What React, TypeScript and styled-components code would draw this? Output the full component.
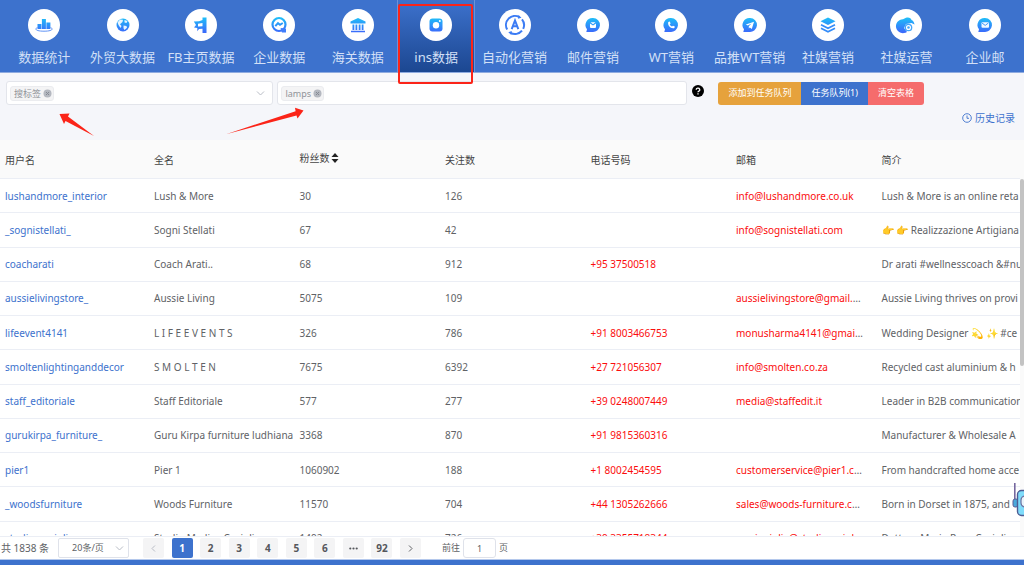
import React from "react";
import styled, { createGlobalStyle, css } from "styled-components";

const BLUE = "#3d72cd";

const Global = createGlobalStyle`
  *, *::before, *::after { box-sizing: border-box; }
  html, body { margin: 0; height: 100%; }
  body, button, input, select {
    font-family: "Noto Sans", "Noto Sans CJK SC", sans-serif;
    font-size: 10px;
    line-height: 14px;
  }
  body { color: #606266; background: #fff; }
  a { color: ${BLUE}; text-decoration: none; }
  button { border: 0; padding: 0; cursor: pointer; }
`;

const Page = styled.div`
  position: relative;
  display: flex;
  flex-direction: column;
  height: 100vh;
  overflow: hidden;
`;

/* ---------- top navigation ---------- */

const Nav = styled.nav`
  display: flex;
  flex: none;
  padding-left: 5px;
  background: ${BLUE};
  border-bottom: 1px solid #8fabdf;
`;

const NavItem = styled.a<{ $active?: boolean }>`
  display: flex;
  flex: 1 1 0;
  min-width: 0;
  flex-direction: column;
  align-items: center;
  gap: 7px;
  padding: 9px 0 5px;
  color: #d3e0f7;
  font-size: 13px;
  line-height: 19px;
  white-space: nowrap;
  ${(p) =>
    p.$active &&
    css`
      position: relative;
      background: linear-gradient(#3d72cd, #1c4791);
      box-shadow: inset 1px 0 #6d92d6, inset -1px 0 #6d92d6;
    `}
`;

const Disc = styled.span`
  display: grid;
  place-items: center;
  width: 32px;
  height: 32px;
  border-radius: 50%;
  background: #fff;
`;

const Highlight = styled.span`
  position: absolute;
  z-index: 2;
  inset: 4px 2px -12px 1px;
  border: 2px solid #fb2418;
  border-radius: 2px;
`;

/* ---------- filters ---------- */

const Filters = styled.section`
  position: relative;
  flex: none;
  padding: 8px 9px 15px 6px;
  background: #f5f6fa;
`;

const FilterRow = styled.div`
  display: flex;
  align-items: center;
`;

const TagBox = styled.div<{ $grow: number }>`
  display: flex;
  flex: ${(p) => p.$grow} 1 0;
  align-items: center;
  min-width: 0;
  height: 24px;
  margin-right: 4px;
  padding: 0 7px 0 3px;
  background: #fff;
  border: 1px solid #e3e5eb;
  border-radius: 3px;
`;

const Tag = styled.span`
  display: flex;
  flex: none;
  align-items: center;
  gap: 2px;
  height: 15px;
  padding: 0 1px 0 3px;
  color: #909399;
  background: #f4f4f5;
  border: 1px solid #ebecef;
  border-radius: 3px;
  font-size: 9px;
  line-height: 13px;
`;

const TagClose = styled.button`
  display: flex;
  background: none;
`;

const TagInput = styled.input`
  flex: 1;
  min-width: 0;
  height: 20px;
  border: 0;
  outline: 0;
  background: none;
`;

const Help = styled.button`
  display: flex;
  flex: none;
  margin: 0 14px 4px 1px;
  background: none;
`;

const Actions = styled.div`
  display: flex;
  flex: none;
  margin-right: 91px;
  border-radius: 3px;
  overflow: hidden;
`;

const Action = styled.button<{ $color: string }>`
  height: 23px;
  padding: 0 10px;
  color: #fff;
  background: ${(p) => p.$color};
  font-size: 9px;
`;

const History = styled.a`
  display: flex;
  align-items: center;
  justify-content: flex-end;
  gap: 3px;
  margin-top: 6px;
`;

const Pointer = styled.svg<{ $x: number }>`
  position: absolute;
  left: ${(p) => p.$x}px;
  top: 34px;
  pointer-events: none;
`;

/* ---------- table ---------- */

const TableArea = styled.main`
  display: flex;
  flex: 1;
  min-height: 0;
`;

const Scroller = styled.div`
  flex: 1;
  min-width: 0;
  overflow: hidden;
`;

const Table = styled.table`
  width: calc(100% + 2px);
  height: 416px;
  table-layout: fixed;
  border-collapse: separate;
  border-spacing: 0;
`;

const Th = styled.th<{ $first?: boolean }>`
  width: ${(p) => (p.$first ? "149px" : "auto")};
  height: 39px;
  padding: 1px 5px 0;
  color: #444;
  background: #fafafa;
  border-bottom: 1px solid #ebeef5;
  font-weight: 400;
  text-align: left;
`;

const SortButton = styled.button`
  display: flex;
  align-items: center;
  gap: 1px;
  margin-bottom: 4px;
  color: inherit;
  background: none;
`;

const Td = styled.td`
  height: 34px;
  padding: 0 0 0 5px;
  border-bottom: 1px solid #ebeef5;
  white-space: nowrap;
  overflow: hidden;
`;

const Contact = styled.div`
  padding-right: 12px;
  overflow: hidden;
  text-overflow: ellipsis;
`;

const Red = styled.span`
  color: #fb0d0d;
`;

const Rail = styled.div`
  flex: none;
  width: 4px;
  padding-top: 39px;
  background: #fafafa;
`;

const Thumb = styled.div`
  height: 187px;
  background: #c3c3c3;
  border-radius: 2px;
`;

/* ---------- pagination ---------- */

const Pager = styled.footer`
  display: flex;
  flex: none;
  align-items: center;
  padding: 1px;
  border-top: 1px solid #ebeef5;
`;

const SizeBox = styled.div`
  position: relative;
  width: 71px;
  margin: 0 14px 0 9px;
  svg { position: absolute; right: 5px; top: 6px; pointer-events: none; }
`;

const SizeSelect = styled.select`
  display: block;
  width: 100%;
  height: 20px;
  padding: 0 0 0 13px;
  color: #606266;
  background: #fff;
  border: 1px solid #dfe2ea;
  border-radius: 2px;
  font-size: 9px;
  appearance: none;
`;

const Pages = styled.div`
  display: flex;
  justify-content: space-between;
  width: 278px;
`;

const PageButton = styled.button<{ $current?: boolean }>`
  display: grid;
  place-items: center;
  width: 21px;
  height: 20px;
  color: ${(p) => (p.$current ? "#fff" : "#55575c")};
  background: ${(p) => (p.$current ? BLUE : "#f4f4f5")};
  border-radius: 2px;
  font-weight: 700;
`;

const Jump = styled.label`
  display: flex;
  align-items: center;
  gap: 3px;
  margin-left: 21px;
  font-size: 9px;
`;

const JumpInput = styled.input`
  width: 33px;
  height: 20px;
  padding: 0;
  color: #606266;
  border: 1px solid #dfe2ea;
  border-radius: 3px;
  font-size: 9px;
  text-align: center;
`;

const BottomBar = styled.div`
  flex: none;
  height: 6px;
  background: ${BLUE};
  border-top: 1px solid #b4c8ec;
`;

const Assistant = styled.button`
  position: absolute;
  right: 0;
  bottom: 46px;
  display: flex;
  background: none;
`;

/* ---------- drawings ---------- */

const G = "url(#sky)";

const Bubble = ({ children }: { children: React.ReactNode }) => (
  <>
    <path d="M9 2a7 7 0 1 1-1.200 13.900H2.300l.7-2.600A7 7 0 0 1 9 2z" fill={G} />
    {children}
  </>
);

const drawings: Record<string, React.ReactNode> = {
  chart: (
    <>
      <path d="M2.500 8h3.900v5H2.500zM6.900 3h4v10h-4zM11.400 6.500h4V13h-4z" fill={G} />
      <path d="M2.500 11.500C-1 13 1 15.200 9 15.200s10-2.200 6.500-3.700" fill="none" stroke="#5f93f6" strokeWidth="1" />
    </>
  ),
  globe: (
    <>
      <circle cx="9" cy="9" r="6.500" fill={G} />
      <path d="M3.500 6.500 6 3.500l3 .3L8.500 6 6 8.200 7.500 10 6.500 12 4.500 9zM10.500 4l3 1-1 2-2-.5zM9.500 9.500l3 .5.5 1.800-2.500 2.200-1-1.800z" fill="#e6f4ff" />
    </>
  ),
  flag: (
    <path d="M10.500 1.500h4v15.500h-4v-4.300L7 13 5.300 15.300V12L2 11.500 4 9 1.800 5.500l5.200-.3 3.500-1.200zM6 7.800v2.700l4.500-.3V7z" fill={G} fillRule="evenodd" />
  ),
  search: (
    <>
      <circle cx="9" cy="8.500" r="6.500" fill="none" stroke={G} strokeWidth="2.200" />
      <path d="m5.300 10.200 2.700-3 2 1.600L12.800 7" fill="none" stroke={G} strokeWidth="2" />
      <path d="M10.500 12l5.500.5v4h-4z" fill="#3f7dfb" />
    </>
  ),
  bank: (
    <path d="M9 2 16.500 5.500v2h-15v-2zM3.500 8.500h1.800V14H3.500zm3 0h1.800V14H6.500zm3.200 0h1.800V14H9.700zm3 0h1.800V14h-1.800zM2 14.800h14v1.500H2z" fill={G} />
  ),
  camera: (
    <>
      <rect x="2.500" y="2.500" width="13" height="13" rx="3" fill={G} />
      <circle cx="9" cy="9.200" r="3.200" fill="#fff" />
      <circle cx="12.800" cy="5" r="1" fill="#fff" />
    </>
  ),
  auto: (
    <g fill="none" stroke="#3c7cf4">
      <path d="M1.200 13.500A9 9 0 0 1 13.500 1.200M16 3.400A9 9 0 0 1 17.200 12.800M16 14.700A9 9 0 0 1 4.500 16.800" strokeWidth="2" />
      <path d="m5.700 13.200 3.300-8.700 3.300 8.700M7 10.300h4" strokeWidth="2" />
      <path d="m12.500-1 3 2.800-3.500 1zM5.800 15l-.5 4-3-2.800z" fill="#3c7cf4" stroke="none" />
    </g>
  ),
  mail: (
    <Bubble>
      <path d="M6 7.500 9 9.500l3-2V11a1 1 0 0 1-1 1H7a1 1 0 0 1-1-1zM6.500 6.300h5L9 8.200z" fill="#fff" />
    </Bubble>
  ),
  phone: (
    <Bubble>
      <path d="M6.300 6 7.800 5.500l.8 2-.9.900c.5 1 1.300 1.700 2.300 2.200l1-.9 1.800.9-.4 1.400c-3.500 1.200-7.200-2.800-6.100-6z" fill="#fff" />
    </Bubble>
  ),
  plane: (
    <Bubble>
      <path d="M4.800 8.500 13 5.800 10.800 13 8.800 11.500 7.800 12.500V10.300L10.500 7.500 6.800 9.500z" fill="#fff" />
    </Bubble>
  ),
  layers: (
    <>
      <path d="m9 1.500 7.500 3.800L9 9 1.500 5.300z" fill={G} />
      <path d="m2 8.800 7 3.500 7-3.500M2 12.300l7 3.500 7-3.500" fill="none" stroke="#338cf9" strokeWidth="1.700" />
    </>
  ),
  bird: (
    <>
      <path d="M9 1.800c3-.8 5 .3 5.500 2.200 1.500.6 2.500 2 3 4.500L14.500 7 9 8l-2 4 3 3.900A7 7 0 1 1 6 3.200c1-.6 2-.8 3-1.400z" fill={G} />
      <circle cx="11.500" cy="11.500" r="3.200" fill="#fff" stroke="#43a6fb" strokeWidth="1.300" />
      <circle cx="11.500" cy="11.500" r="1.300" fill="#43a6fb" />
    </>
  ),
  letter: (
    <Bubble>
      <rect x="5.500" y="6.200" width="7.500" height="5.500" rx="1" fill="#f0f8ff" />
      <path d="m6 7 3.200 2.400L12.400 7" fill="none" stroke="#2f8df8" strokeWidth=".9" />
    </Bubble>
  ),
};

const NavIcon = ({ name }: { name: string }) => (
  <Disc>
    <svg width="18" height="18" viewBox="0 0 18 18" overflow="visible" aria-hidden="true">
      {drawings[name]}
    </svg>
  </Disc>
);

const CloseIcon = () => (
  <svg width="9" height="9" viewBox="0 0 9 9" aria-hidden="true">
    <circle cx="4.500" cy="4.500" r="4" fill="#b4b8c0" />
    <path d="m3 3 3 3m0-3L3 6" stroke="#858a94" strokeWidth="1" />
  </svg>
);

const Chevron = ({ dir }: { dir: "down" | "left" | "right" }) => {
  const d = { down: "M1 2.500 4.500 6 8 2.500", left: "M6 1.500 3 4.500l3 3", right: "m3 1.500 3 3-3 3" }[dir];
  return (
    <svg width="9" height="9" viewBox="0 0 9 9" aria-hidden="true">
      <path d={d} fill="none" stroke={dir === "right" ? "#606266" : "#b9bdc6"} strokeWidth="1" />
    </svg>
  );
};

/* ---------- data ---------- */

const nav: [string, string][] = [
  ["chart", "数据统计"],
  ["globe", "外贸大数据"],
  ["flag", "FB主页数据"],
  ["search", "企业数据"],
  ["bank", "海关数据"],
  ["camera", "ins数据"],
  ["auto", "自动化营销"],
  ["mail", "邮件营销"],
  ["phone", "WT营销"],
  ["plane", "品推WT营销"],
  ["layers", "社媒营销"],
  ["bird", "社媒运营"],
  ["letter", "企业邮"],
];

const rows: string[][] = [
  ["lushandmore_interior", "Lush & More", "30", "126", "", "info@lushandmore.co.uk", "Lush & More is an online reta"],
  ["_sognistellati_", "Sogni Stellati", "67", "42", "", "info@sognistellati.com", "👉 👉 Realizzazione Artigiana"],
  ["coacharati", "Coach Arati..", "68", "912", "+95 37500518", "", "Dr arati #wellnesscoach &#nu"],
  ["aussielivingstore_", "Aussie Living", "5075", "109", "", "aussielivingstore@gmail.com", "Aussie Living thrives on provi"],
  ["lifeevent4141", "L I F E E V E N T S", "326", "786", "+91 8003466753", "monusharma4141@gmail.com", "Wedding Designer 💫 ✨ #ce"],
  ["smoltenlightinganddecor", "S M O L T E N", "7675", "6392", "+27 721056307", "info@smolten.co.za", "Recycled cast aluminium & h"],
  ["staff_editoriale", "Staff Editoriale", "577", "277", "+39 0248007449", "media@staffedit.it", "Leader in B2B communication"],
  ["gurukirpa_furniture_", "Guru Kirpa furniture ludhiana", "3368", "870", "+91 9815360316", "", "Manufacturer & Wholesale A"],
  ["pier1", "Pier 1", "1060902", "188", "+1 8002454595", "customerservice@pier1.com", "From handcrafted home acce"],
  ["_woodsfurniture", "Woods Furniture", "11570", "704", "+44 1305262666", "sales@woods-furniture.co.uk", "Born in Dorset in 1875, and"],
  ["studio_caviglia", "Studio Medico Caviglia", "1492", "726", "+39 3355718344", "mariagiulia@studiocaviglia.it", "Dottore Maria Rosa Caviglia"],
];

export default function App() {
  return (
    <Page>
      <Global />
      <svg width="0" height="0" style={{ position: "absolute" }} aria-hidden="true">
        <defs>
          <linearGradient id="sky" gradientUnits="userSpaceOnUse" x1="0" y1="2" x2="0" y2="16">
            <stop offset="0" stopColor="#1fbdf8" />
            <stop offset="1" stopColor="#3a6bfb" />
          </linearGradient>
        </defs>
      </svg>

      <Nav>
        {nav.map(([icon, label]) => (
          <NavItem href="#" key={icon} $active={icon === "camera"}>
            <NavIcon name={icon} />
            {label}
            {icon === "camera" && <Highlight />}
          </NavItem>
        ))}
      </Nav>

      <Filters>
        <FilterRow>
          <TagBox $grow={256}>
            <Tag>
              搜标签
              <TagClose aria-label="移除搜标签"><CloseIcon /></TagClose>
            </Tag>
            <TagInput aria-label="搜索类型" />
            <Chevron dir="down" />
          </TagBox>
          <TagBox $grow={399}>
            <Tag>
              lamps
              <TagClose aria-label="移除lamps"><CloseIcon /></TagClose>
            </Tag>
            <TagInput aria-label="关键词" />
          </TagBox>
          <Help aria-label="帮助">
            <svg width="12" height="12" viewBox="0 0 12 12" aria-hidden="true">
              <circle cx="6" cy="6" r="6" fill="#000" />
              <path d="M4.200 4.800a1.800 1.600 0 1 1 2.700 1.300c-.6.300-.9.500-.9 1.100M6 8.200v1.400" fill="none" stroke="#fff" strokeWidth="1.300" />
            </svg>
          </Help>
          <Actions>
            <Action $color="#e6a23c">添加到任务队列</Action>
            <Action $color={BLUE}>任务队列(1)</Action>
            <Action $color="#f56c6c">清空表格</Action>
          </Actions>
        </FilterRow>
        <History href="#">
          <svg width="10" height="10" viewBox="0 0 10 10" fill="none" stroke={BLUE} strokeWidth=".9" aria-hidden="true">
            <circle cx="5" cy="5" r="4.300" />
            <path d="M5 2.500V5.300h2" />
          </svg>
          历史记录
        </History>
        <Pointer $x={58} width="40" height="32" viewBox="0 0 40 32" aria-hidden="true">
          <path d="M1.500 7 11.500 6.500 10 9.500 36 29 7.500 14 6 17z" fill="#fb2418" />
        </Pointer>
        <Pointer $x={224} width="84" height="32" viewBox="0 0 84 32" aria-hidden="true">
          <path d="M79.500 3.500 71 .8l.6 3.400L2 27.300 72.500 8.500l1 3z" fill="#fb2418" />
        </Pointer>
      </Filters>

      <TableArea>
        <Scroller>
          <Table>
            <thead>
              <tr>
                <Th $first>用户名</Th>
                <Th>全名</Th>
                <Th>
                  <SortButton>
                    粉丝数
                    <svg width="8" height="10" viewBox="0 0 8 10" aria-hidden="true">
                      <path d="m4 0 3.500 4h-7zM4 10 .5 6h7z" fill="#222" />
                    </svg>
                  </SortButton>
                </Th>
                <Th>关注数</Th>
                <Th>电话号码</Th>
                <Th>邮箱</Th>
                <Th>简介</Th>
              </tr>
            </thead>
            <tbody>
              {rows.map(([user, name, fans, follows, phone, email, bio]) => (
                <tr key={user}>
                  <Td><a href="#">{user}</a></Td>
                  <Td>{name}</Td>
                  <Td>{fans}</Td>
                  <Td>{follows}</Td>
                  <Td><Red>{phone}</Red></Td>
                  <Td><Contact><Red>{email}</Red></Contact></Td>
                  <Td>{bio}</Td>
                </tr>
              ))}
            </tbody>
          </Table>
        </Scroller>
        <Rail><Thumb /></Rail>
      </TableArea>

      <Pager>
        共 1838 条
        <SizeBox>
          <SizeSelect aria-label="每页条数"><option>20条/页</option></SizeSelect>
          <Chevron dir="down" />
        </SizeBox>
        <Pages>
          <PageButton aria-label="上一页"><Chevron dir="left" /></PageButton>
          <PageButton $current>1</PageButton>
          {["2", "3", "4", "5", "6", "more", "92"].map((n) => (
            <PageButton key={n}>
              {n === "more" ? (
                <svg width="9" height="3" viewBox="0 0 9 3" fill="#55575c" aria-label="更多">
                  <circle cx="1.300" cy="1.500" r="1.100" />
                  <circle cx="4.500" cy="1.500" r="1.100" />
                  <circle cx="7.700" cy="1.500" r="1.100" />
                </svg>
              ) : n}
            </PageButton>
          ))}
          <PageButton aria-label="下一页"><Chevron dir="right" /></PageButton>
        </Pages>
        <Jump>
          前往
          <JumpInput defaultValue="1" />
          页
        </Jump>
      </Pager>
      <BottomBar />

      <Assistant aria-label="助手">
        <svg width="12" height="37" viewBox="0 0 12 37" aria-hidden="true">
          <path d="M2.800 1v17" stroke="#76689f" strokeWidth="1.600" />
          <rect x="1" y="17" width="5" height="8" rx="2" fill="#4aa9dc" stroke="#5b5f96" />
          <rect x="5.500" y="8.500" width="14" height="25" rx="4" fill="#7fdcfb" stroke="#4f5c93" strokeWidth="1.400" />
          <rect x="9" y="14" width="9" height="11" rx="4" fill="#e9f4fb" stroke="#6a6f9f" strokeWidth="1.200" />
        </svg>
      </Assistant>
    </Page>
  );
}
